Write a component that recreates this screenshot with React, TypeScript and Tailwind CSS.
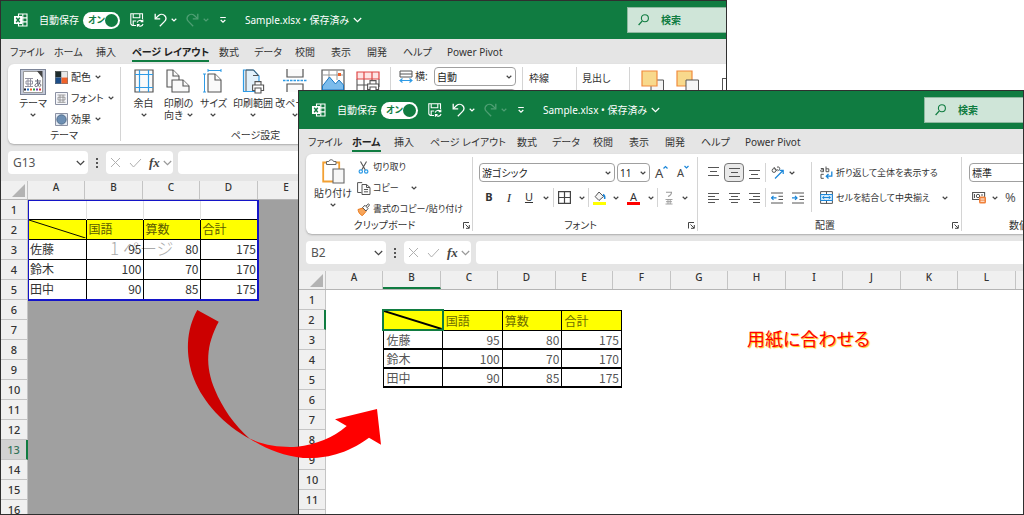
import React from 'react';

type Kids = { children?: React.ReactNode };

const Svg = ({ w, h, vb, label, children }: Kids & { w: number; h: number; vb?: string; label?: string }) => (
  <svg
    width={w}
    height={h}
    viewBox={vb ?? `0 0 ${w} ${h}`}
    fill="none"
    className="block shrink-0"
    aria-hidden={label ? undefined : true}
    aria-label={label}
  >
    {children}
  </svg>
);

const Chevron = ({ w = 6, color = '#444' }: { w?: number; color?: string }) => (
  <Svg w={w} h={w === 6 ? 4 : 6} vb={w === 6 ? '0 0 6 4' : '0 0 9 6'}>
    <path d={w === 6 ? 'M.7.8 3 3 5.3.8' : 'M.8 1 4.5 4.7 8.2 1'} stroke={color} strokeWidth="1.2" />
  </Svg>
);

/* ---------- title bar ---------- */

const ExcelLogo = () => (
  <Svg w={14} h={14}>
    <path d="M4.5 1h8.5v12H4.5zM8.8 1v12M4.5 4.9H13M4.5 8.9H13" stroke="#fff" strokeWidth="1.1" />
    <rect x="0" y="3" width="8" height="8" fill="#fff" />
    <path d="m2.2 4.8 3.6 4.4M5.8 4.8 2.2 9.2" stroke="#107c41" strokeWidth="1.4" />
  </Svg>
);

const SaveIcon = () => (
  <Svg w={14} h={14}>
    <path d="M6 12.5H2.2L.8 11V.8h11.7V6M3.2.8v4h6.6v-4M3.2 12.3V8h3" stroke="#fff" strokeWidth="1.1" />
    <path d="M7.2 9.6a3 3 0 0 1 5.3-1M12.8 6.6v2.2h-2.2M13 11a3 3 0 0 1-5.3 1M7.4 13.8v-2.2h2.2" stroke="#fff" strokeWidth="1.1" />
  </Svg>
);

const Undo = ({ flip }: { flip?: boolean }) => (
  <Svg w={13} h={14}>
    <g transform={flip ? 'matrix(-1 0 0 1 13 0)' : undefined} stroke={flip ? '#4f9f74' : '#fff'} strokeWidth="1.3">
      <path d="M1.2.8v5h5" />
      <path d="M1.4 5.6 4.6 2.6c2-1.7 4.7-1.5 6.2.2 1.6 1.8 1.3 4-.2 5.600L5.800 13.200" />
    </g>
  </Svg>
);

const TitleBar = ({ id }: { id: string }) => (
  <header className="flex h-[38px] shrink-0 items-center bg-[#107c41] pl-[13px] text-[10px] leading-[14px] text-white">
    <ExcelLogo />
    <label htmlFor={`${id}-autosave`} className="ml-[11px] w-11">自動保存</label>
    <span className="relative flex h-[17px] w-[37px] items-center rounded-full bg-white">
      <input id={`${id}-autosave`} type="checkbox" defaultChecked className="peer absolute inset-0 appearance-none" />
      <span className="pl-[5px] text-[9px] font-bold text-[#107c41]">オン</span>
      <span className="ml-auto mr-[2px] size-[13px] rounded-full bg-[#107c41]" />
    </span>
    <button aria-label="保存" className="ml-[10px]"><SaveIcon /></button>
    <button aria-label="元に戻す" className="ml-[10px] flex items-center gap-1"><Undo /><Chevron color="#fff" /></button>
    <button aria-label="やり直し" className="ml-[9px] flex items-center gap-1"><Undo flip /><Chevron color="#4f9f74" /></button>
    <button aria-label="クイック アクセス" className="ml-[10px]">
      <Svg w={8} h={8}><path d="M1.200 1.500h5.600M1.700 4 4 6.200 6.300 4" stroke="#fff" strokeWidth="1.200" /></Svg>
    </button>
    <button className="ml-[18px] flex items-center gap-1 whitespace-nowrap">
      <span>Sample.xlsx • 保存済み</span>
      <Chevron w={9} color="#fff" />
    </button>
    <label className="ml-auto flex h-[26px] w-[99px] shrink-0 items-center gap-3 border border-r-0 border-[#8fb8a0] bg-[#cfe5d8] pl-[10px]">
      <Svg w={11} h={12}>
        <circle cx="6.900" cy="4.200" r="3.500" stroke="#107c41" strokeWidth="1.100" />
        <path d="M4.300 6.800.6 11" stroke="#107c41" strokeWidth="1.200" />
      </Svg>
      <input aria-label="検索" placeholder="検索" className="w-14 bg-transparent font-bold text-[#107c41] outline-none placeholder:text-[#107c41]" />
    </label>
  </header>
);

const TABS = ['ファイル', 'ホーム', '挿入', 'ページ レイアウト', '数式', 'データ', '校閲', '表示', '開発', 'ヘルプ', 'Power Pivot'];

const Tabs = ({ active }: { active: string }) => (
  <nav className="grid h-[25px] shrink-0 grid-cols-[44px_42px_36px_87px_35px_41px_36px_36px_36px_44px_64px] items-start justify-start pl-[9px] pt-[5px] text-[10px] leading-[16px] text-[#333]">
    {TABS.map((t) => (
      <button
        key={t}
        className={
          t === active
            ? 'justify-self-start whitespace-nowrap border-b-2 border-[#107c41] font-bold text-[#222]'
            : 'justify-self-start whitespace-nowrap'
        }
      >
        {t}
      </button>
    ))}
  </nav>
);

/* ---------- ribbon pieces ---------- */

const Launcher = () => (
  <button aria-label="詳細設定" className="mr-[2px]">
    <Svg w={7} h={7}><path d="M.5 6.500V.5H6M2.500 2.500 6 6M6.300 3v3.300H3" stroke="#444" strokeWidth="1" /></Svg>
  </button>
);

const Group = ({ label, width, launcher, children }: Kids & { label?: string; width: string; launcher?: boolean }) => (
  <section className={`${width} flex shrink-0 flex-col border-r border-[#d4d4d4]`}>
    <div className="flex grow">{children}</div>
    <div className="flex h-3 items-center leading-3">
      <span className="grow whitespace-nowrap text-center">{label}</span>
      {launcher && <Launcher />}
    </div>
  </section>
);

const Big = ({ icon, lines, inline }: { icon: React.ReactNode; lines: string[]; inline?: boolean }) => (
  <button className="flex flex-col items-center pt-[2px] leading-3">
    <span className="flex h-[28px] items-start">{icon}</span>
    <span className="whitespace-nowrap">{lines[0]}</span>
    <span className="flex h-3 items-center gap-1 whitespace-nowrap">
      {inline && lines[1]}
      <Chevron />
    </span>
  </button>
);

const Small = ({ icon, text, chev, wide }: { icon: React.ReactNode; text: string; chev?: boolean; wide?: boolean }) => (
  <button className="flex h-5 items-center whitespace-nowrap">
    <span className="flex w-4 shrink-0">{icon}</span>
    <span className={wide ? 'mr-3' : 'mr-1'}>{text}</span>
    {chev && <Chevron />}
  </button>
);

const Drop = ({ label, value, width }: { label: string; value: string; width: string }) => (
  <span className={`${width} relative flex h-[19px] shrink-0 items-center rounded border border-[#a0a0a0] bg-white`}>
    <select aria-label={label} className="h-full w-full appearance-none bg-transparent pl-[2px] text-[10px] leading-3 text-[#222] outline-none">
      <option>{value}</option>
    </select>
    <span className="pointer-events-none absolute right-[3px]"><Chevron /></span>
  </span>
);

const Slot = ({ w, label, children }: Kids & { w: string; label: string }) => (
  <button aria-label={label} className={`${w} flex h-[19px] shrink-0 items-center justify-center`}>{children}</button>
);

const Rule = () => <span className="h-[19px] w-px shrink-0 bg-[#d4d4d4]" />;

const PageCorner = ({ x, y, w, h }: { x: number; y: number; w: number; h: number }) => (
  <g stroke="#555" strokeWidth="1.100" fill="#fafafa">
    <path d={`M${x} ${y}h${w - 6}l6 6v${h - 6}h-${w}z`} />
    <path d={`M${x + w - 6} ${y}v6h6`} />
  </g>
);

const Printer = ({ x, y }: { x: number; y: number }) => (
  <g transform={`translate(${x} ${y})`} stroke="#555" strokeWidth="1.100" fill="#fff">
    <path d="M3 4V.6h6V4M.6 4h11v5.500H.6z" />
    <path d="M3 7h6v5H3z" />
  </g>
);

const ThemeIcon = () => (
  <Svg w={26} h={26}>
    <rect x=".5" y=".5" width="25" height="25" fill="#c3c9d8" stroke="#7d8598" />
    <path d="M3.500 2.500h15l4 5v16h-19z" fill="#fff" stroke="#999" />
    <path d="M17 2h5.500v7z" fill="#444" />
    <path d="M5 9.500h8M5 17.500h8M8 9.500v8M10.500 9.500v8M6 12h6.500v3H6z" stroke="#889" strokeWidth=".9" />
    <path d="M15 12h6M17.500 10c0 4 0 6 1.500 7.500M20 13c-1 3-3 5-4.500 4.500s0-3.500 2.500-3.500 4 2.500 1.500 4" stroke="#556" strokeWidth=".9" />
    <path d="M4 20.500h2" stroke="#223" strokeWidth="2" />
    <path d="M7 20.500h2" stroke="#2a73c5" strokeWidth="2" />
    <path d="M10 20.500h2" stroke="#f0622a" strokeWidth="2" />
    <path d="M13 20.500h2" stroke="#2b9b4b" strokeWidth="2" />
    <path d="M16 20.500h2" stroke="#7b3fb0" strokeWidth="2" />
    <path d="M19 20.500h2" stroke="#d33" strokeWidth="2" />
  </Svg>
);

const ColorsIcon = () => (
  <Svg w={13} h={13}>
    <path d="M0 0h6.500v6.500H0z" fill="#1e2b2b" /><path d="M6.500 0H13v6.500H6.500z" fill="#e9e9e9" />
    <path d="M0 6.500h6.500V13H0z" fill="#1d4e89" /><path d="M6.500 6.500H13V13H6.500z" fill="#f0622a" />
    <path d="M.5.5h12v12H.5z" stroke="#777" strokeWidth=".6" />
  </Svg>
);

const FontsIcon = () => (
  <Svg w={13} h={13}>
    <path d="M.5.5h12v12H.5z" fill="#f5f6fa" stroke="#8b91a3" />
    <path d="M2.500 3h8M2.500 10.300h8M5 3v7.300M8 3v7.300M3 5.200h7v2.800H3z" stroke="#888" strokeWidth=".8" />
  </Svg>
);

const EffectsIcon = () => (
  <Svg w={13} h={13}>
    <path d="M.5.5h12v12H.5z" fill="#e4eaf3" stroke="#8b91a3" />
    <circle cx="6.500" cy="6.500" r="4.700" fill="#6d8fb3" stroke="#46627f" strokeWidth=".8" />
  </Svg>
);

const MarginsIcon = () => (
  <Svg w={20} h={24}>
    <path d="M1 1h18v22H1z" fill="#fafafa" stroke="#555" strokeWidth="1.200" />
    <path d="M5.500 1v22M14.500 1v22M1 5.500h18M1 18.500h18" stroke="#2e9be6" strokeWidth="1.200" />
  </Svg>
);

const OrientationIcon = () => (
  <Svg w={24} h={24}>
    <PageCorner x={1} y={1} w={12} h={17} />
    <PageCorner x={6} y={11} w={17} h={12} />
  </Svg>
);

const SizeIcon = () => (
  <Svg w={20} h={24}>
    <PageCorner x={5} y={5} w={13} h={18} />
    <path d="M5 1.500h13M5 0v3M18 0v3M1.500 5v18M0 5h3M0 23h3" stroke="#2e9be6" />
  </Svg>
);

const PrintAreaIcon = () => (
  <Svg w={23} h={25}>
    <path d="M1.500 1h10l5.500 6v15.500H1.500z" fill="#e3f1fb" stroke="#2e9be6" strokeWidth="1.200" />
    <path d="M4 1h7.500l5 5.500H11M4 1v21" stroke="#555" />
    <Printer x={10} y={12} />
  </Svg>
);

const BreaksIcon = () => (
  <Svg w={24} h={24}>
    <path d="M4 0v8h16V0M4 23v-8h16v8" fill="#fafafa" stroke="#555" strokeWidth="1.200" />
    <path d="M0 11.500h24" stroke="#2e9be6" strokeWidth="1.500" strokeDasharray="2.500 1" />
  </Svg>
);

const BackgroundIcon = () => (
  <Svg w={24} h={24}>
    <path d="M1 1h22v20H1z" fill="#fff" stroke="#555" strokeWidth="1.200" />
    <path d="M1 6h22M8 1v10M16 1v10" stroke="#999" />
    <path d="m1.500 17 7-9 6 7 3.500-4 4.500 5v5h-21z" fill="#7cbcec" stroke="#1b78c2" />
    <path d="M17 4h3v3h-3z" fill="#f0622a" />
  </Svg>
);

const PrintTitlesIcon = () => (
  <Svg w={24} h={24} vb="0 -2 24 24">
    <path d="M1 8v13M1 14h22M8 8v13M16 8v13M23 8v8" stroke="#555" strokeWidth="1.100" />
    <path d="M1 1h22v7H1zM8 1v7M16 1v7" fill="#fde4e4" stroke="#e04545" strokeWidth="1.200" />
    <Printer x={11} y={9} />
  </Svg>
);

const WidthIcon = () => (
  <Svg w={14} h={14}>
    <path d="M1 1h12v6H1zM1 4h12" stroke="#555" />
    <path d="M1 10.500h12M3.500 8.500l-2.500 2 2.500 2M10.500 8.500l2.500 2-2.500 2" stroke="#2e9be6" strokeWidth="1.100" />
  </Svg>
);

const ForwardIcon = ({ back }: { back?: boolean }) => (
  <Svg w={24} h={26}>
    {back ? (
      <>
        <path d="M1 1h15v15H1z" fill="#f8d98c" stroke="#f08a3c" strokeWidth="1.200" />
        <path d="M10 10h12.500v13H10z" fill="#f5f5f5" stroke="#555" />
      </>
    ) : (
      <>
        <path d="M10 10h12.500v13H10z" fill="#f5f5f5" stroke="#555" />
        <path d="M1 1h15v15H1z" fill="#f8d98c" stroke="#f08a3c" strokeWidth="1.200" />
      </>
    )}
  </Svg>
);

const LayoutRibbon = () => (
  <>
    <Group width="w-[113px]" label="テーマ">
      <div className="grid w-[47px] shrink-0 pl-[3px]"><Big icon={<ThemeIcon />} lines={['テーマ']} /></div>
      <div className="flex flex-col gap-px">
        <Small icon={<ColorsIcon />} text="配色" chev />
        <Small icon={<FontsIcon />} text="フォント" chev />
        <Small icon={<EffectsIcon />} text="効果" chev />
      </div>
    </Group>
    <Group width="w-[270px]" label="ページ設定">
      <div className="grid grid-cols-[35px_35px_35px_44px_40px_36px_33px] justify-items-center pl-[5px]">
        <Big icon={<MarginsIcon />} lines={['余白']} />
        <Big icon={<OrientationIcon />} lines={['印刷の', '向き']} inline />
        <Big icon={<SizeIcon />} lines={['サイズ']} />
        <Big icon={<PrintAreaIcon />} lines={['印刷範囲']} />
        <Big icon={<BreaksIcon />} lines={['改ページ']} />
        <Big icon={<BackgroundIcon />} lines={['背景']} />
        <Big icon={<PrintTitlesIcon />} lines={['印刷']} />
      </div>
    </Group>
    <Group width="w-[132px]" label="拡大縮小印刷">
      <div className="grid grid-cols-[16px_19px_82px] content-start items-center gap-y-[3px] pl-2">
        <WidthIcon /><span>横:</span><Drop label="横" value="自動" width="w-[82px]" />
        <WidthIcon /><span>縦:</span><Drop label="縦" value="自動" width="w-[82px]" />
      </div>
    </Group>
    <Group width="w-[54px]"><span className="pl-[6px] pt-1">枠線</span></Group>
    <Group width="w-[53px]"><span className="pl-[5px] pt-1">見出し</span></Group>
    <div className="flex shrink-0 gap-[11px] pl-[11px] pt-[3px]">
      <ForwardIcon /><ForwardIcon back />
      <span className="ml-[11px] mt-2 h-[30px] w-5 shrink-0 border border-[#555]" />
    </div>
  </>
);

/* ---------- home ribbon ---------- */

const PasteIcon = () => (
  <Svg w={23} h={26}>
    <path d="M1.200 3.500h16v19h-16z" fill="#fff" stroke="#f2a033" strokeWidth="1.800" />
    <path d="M4.500 5.500v-3h2.300a2.500 2.500 0 0 1 4.800 0H14v3z" fill="#fff" stroke="#666" />
    <path d="M11 10h11v14H11z" fill="#f7f7f7" stroke="#666" strokeWidth="1.100" />
  </Svg>
);

const CutIcon = () => (
  <Svg w={13} h={13}>
    <path d="M3.500.5 8.300 9M9.500.5 4.700 9" stroke="#555" strokeWidth="1.100" />
    <circle cx="3.800" cy="10.500" r="1.700" stroke="#2e9be6" strokeWidth="1.200" />
    <circle cx="9.200" cy="10.500" r="1.700" stroke="#2e9be6" strokeWidth="1.200" />
  </Svg>
);

const CopyIcon = () => (
  <Svg w={14} h={13}>
    <path d="M4.500 10.500H.6V.6h4.600" stroke="#555" />
    <path d="M5 2.500h4.500l3.500 3v7H5z" fill="#fafafa" stroke="#555" />
    <path d="M9.500 2.500v3H13M7 7.500h4M7 9.800h4" stroke="#555" />
  </Svg>
);

const PainterIcon = () => (
  <Svg w={13} h={13}>
    <path d="m1 6.500 5-1.500 3 3.500-3.500 4C4 12.500 1.500 10 1 6.500z" fill="#f7a55a" stroke="#e8791c" />
    <path d="M5.500 4.500 8 2.300l3 3.200-2 2.500zM9 3l2.500-2.200 1 1.200-2 2.500" fill="#fff" stroke="#555" />
  </Svg>
);

const Lines = ({ rows, y = 3 }: { rows: [number, number][]; y?: number }) => (
  <Svg w={13} h={14}>
    {rows.map(([a, b], i) => (
      <path key={i} d={`M${a} ${y - 0.5 + i * (rows.length === 3 ? 4 : 3)}H${b}`} stroke="#555" strokeWidth="1.100" />
    ))}
  </Svg>
);

const Indent = ({ inward }: { inward?: boolean }) => (
  <Svg w={13} h={12}>
    <path d="M0 1h12M7.500 4.300H12M7.500 7.500H12M0 11h12" stroke="#555" />
    <path d={inward ? 'M0 5.900h5M3 3.900l2 2-2 2' : 'M5.500 5.900H.5M2.500 3.900l-2 2 2 2'} stroke="#1a86d9" strokeWidth="1.200" />
  </Svg>
);

const GrowFont = ({ shrink }: { shrink?: boolean }) => (
  <span className="flex items-start text-[#444]">
    <span className={shrink ? 'text-[11px] leading-4' : 'text-[13px] leading-4'}>A</span>
    <Svg w={5} h={5}>
      <path d={shrink ? 'M.5 1 2.500 3 4.500 1' : 'M.5 3.500 2.500 1.500 4.500 3.500'} stroke="#1a86d9" strokeWidth="1.200" />
    </Svg>
  </span>
);

const HomeRibbon = () => (
  <>
    <Group width="w-[167px]" label="クリップボード" launcher>
      <div className="grid w-[51px] shrink-0 pl-[3px]"><Big icon={<PasteIcon />} lines={['貼り付け']} /></div>
      <div className="flex flex-col gap-px text-[9px]">
        <Small icon={<CutIcon />} text="切り取り" />
        <Small icon={<CopyIcon />} text="コピー" chev wide />
        <Small icon={<PainterIcon />} text="書式のコピー/貼り付け" />
      </div>
    </Group>
    <Group width="w-[225px]" label="フォント" launcher>
      <div className="flex flex-col gap-[6px] pl-[6px] pt-[6px]">
        <div className="flex items-center">
          <Drop label="フォント名" value="游ゴシック" width="w-[136px]" />
          <span className="ml-[2px]"><Drop label="サイズ" value="11" width="w-[33px]" /></span>
          <button aria-label="拡大" className="ml-[5px] w-[22px]"><GrowFont /></button>
          <button aria-label="縮小"><GrowFont shrink /></button>
        </div>
        <div className="flex items-center">
          <Slot w="w-5" label="太字"><b className="text-[11px]">B</b></Slot>
          <Slot w="w-5" label="斜体"><i className="font-['Liberation_Serif',serif] text-[13px]">I</i></Slot>
          <Slot w="w-5" label="下線"><u className="text-[11px]">U</u></Slot>
          <Slot w="w-[14px]" label="下線の種類"><Chevron /></Slot>
          <Rule />
          <Slot w="w-[21px]" label="罫線">
            <Svg w={13} h={13}><path d="M.6.6h11.800v11.800H.6zM6.500.6v11.800M.6 6.500h11.800" stroke="#444" strokeWidth="1.200" /></Svg>
          </Slot>
          <Slot w="w-[13px]" label="罫線の種類"><Chevron /></Slot>
          <Rule />
          <Slot w="w-[21px]" label="塗りつぶし">
            <Svg w={13} h={14}>
              <path d="m6 1 4.500 4.500L6 9.500 2.200 5.700z" fill="#f4f4f4" stroke="#555" />
              <path d="M10 3.500c1.500.5 2 2 1.700 4.500" stroke="#1a86d9" strokeWidth="1.500" />
              <path d="M0 11h13v3H0z" fill="#ff0" />
            </Svg>
          </Slot>
          <Slot w="w-3" label="塗りつぶしの色"><Chevron /></Slot>
          <Slot w="w-[23px]" label="フォントの色">
            <span className="flex w-[13px] flex-col items-center border-b-[3px] border-[#f00] text-[11px] leading-[11px]">A</span>
          </Slot>
          <Slot w="w-3" label="フォントの色の種類"><Chevron /></Slot>
          <Rule />
          <Slot w="w-[21px]" label="ふりがな">
            <Svg w={8} h={14}>
              <path d="M1 1.200h5.500c0 2-1.500 3.500-3.500 4.300" stroke="#999" strokeWidth="1.100" />
              <path d="M.5 8.500h7M.5 13h7M3 8.500V13M5.200 8.500V13M1 10.700h6" stroke="#999" strokeWidth=".9" />
            </Svg>
          </Slot>
          <Slot w="w-[11px]" label="ふりがなの設定"><Chevron /></Slot>
        </div>
      </div>
    </Group>
    <Group width="w-[264px]" label="配置" launcher>
      <div className="flex flex-col gap-[6px] pl-[5px] pt-[6px]">
        <div className="flex">
          <Slot w="w-[21px]" label="上揃え"><Lines rows={[[1, 12], [3, 10], [1, 12]]} y={2} /></Slot>
          <button aria-label="上下中央揃え" className="flex h-[19px] w-5 items-center justify-center rounded border border-[#777] bg-[#e9e9e9]">
            <Lines rows={[[1, 12], [3, 10], [1, 12]]} />
          </button>
          <Slot w="w-[21px]" label="下揃え"><Lines rows={[[1, 12], [3, 10], [1, 12]]} y={5} /></Slot>
          <Rule />
          <Slot w="w-[22px]" label="方向">
            <Svg w={13} h={13}>
              <circle cx="3" cy="4.500" r="1.900" stroke="#555" /><path d="m2.800 1 3.500 4.200" stroke="#555" />
              <path d="M6 1.200c1.500-1 3.500.5 2.500 2.300-1 1.500-2 .7-2.400-.2" stroke="#555" />
              <path d="M4 12.500 12 4.500M8.500 4.300H12.200V8" stroke="#1a86d9" strokeWidth="1.200" />
            </Svg>
          </Slot>
          <Slot w="w-2" label="方向の種類"><Chevron /></Slot>
        </div>
        <div className="flex">
          <Slot w="w-[21px]" label="左揃え"><Lines rows={[[1, 12], [1, 8], [1, 12], [1, 8]]} /></Slot>
          <Slot w="w-5" label="中央揃え"><Lines rows={[[1, 12], [3, 10], [1, 12], [3, 10]]} /></Slot>
          <Slot w="w-[21px]" label="右揃え"><Lines rows={[[1, 12], [5, 12], [1, 12], [5, 12]]} /></Slot>
          <Rule />
          <Slot w="w-[22px]" label="インデント減"><Indent /></Slot>
          <Slot w="w-[20px]" label="インデント増"><Indent inward /></Slot>
        </div>
      </div>
      <span className="ml-[3px] mt-[5px] h-[50px] w-px shrink-0 bg-[#d4d4d4]" />
      <div className="flex flex-col gap-[6px] pl-2 pt-[6px] text-[9px]">
        <button className="flex h-[19px] items-center whitespace-nowrap">
          <span className="w-4">
            <Svg w={13} h={13}>
              <path d="M.8 2.500h2.700v3.200H1.300c-1-.2-1-1.600 0-1.800h2.200M6 .5v5.200h2.800V2.800H6M3.800 8.300H1v4h2.800" stroke="#555" />
              <path d="M11.800 5.500v4.700H6.500M8.500 8l-2.200 2.200 2.200 2.300" stroke="#1a86d9" strokeWidth="1.300" />
            </Svg>
          </span>
          折り返して全体を表示する
        </button>
        <button className="flex h-[19px] items-center whitespace-nowrap">
          <span className="w-4">
            <Svg w={13} h={13}>
              <path d="M.6.6h11.800v11.800H.6zM6.500.6v3M6.500 9.500v3" fill="#fff" stroke="#555" />
              <path d="M.6 3.500h11.800v6H.6z" fill="#d6ecfb" stroke="#1a86d9" />
              <path d="M2.500 6.500h8M4.300 5 2.700 6.500 4.300 8M8.700 5l1.600 1.500L8.700 8" stroke="#1a86d9" />
            </Svg>
          </span>
          <span className="mr-3">セルを結合して中央揃え</span>
          <Chevron />
        </button>
      </div>
    </Group>
    <Group width="w-[115px]" label="数値">
      <div className="flex flex-col gap-[6px] pl-[7px] pt-[6px]">
        <Drop label="表示形式" value="標準" width="w-[100px]" />
        <div className="flex items-center">
          <Slot w="w-5" label="通貨">
            <Svg w={14} h={13}>
              <path d="M.6 1.500h12v7H.6z" stroke="#555" strokeWidth="1.100" /><circle cx="6" cy="5" r="1.700" stroke="#555" /><path d="M2.500 3v4M10 3v2" stroke="#555" />
              <rect x="7" y="5.500" width="7" height="7" rx="1.500" fill="#f0813a" /><path d="M8.500 8h4M8.500 10.200h4" stroke="#fff" />
            </Svg>
          </Slot>
          <Slot w="w-3" label="通貨の種類"><Chevron /></Slot>
          <Slot w="w-[19px]" label="パーセント"><span className="text-[13px] text-[#555]">%</span></Slot>
        </div>
      </div>
    </Group>
  </>
);

/* ---------- window ---------- */

const FormulaBar = ({ cell }: { cell: string }) => (
  <div className="my-[7px] flex h-[23px] shrink-0 items-stretch pl-[7px]">
    <label className="flex w-20 items-center rounded bg-white pr-[3px]">
      <input aria-label="名前ボックス" defaultValue={cell} className="w-0 grow bg-transparent pl-[5px] text-[12px] leading-4 text-[#555] outline-none" />
      <Chevron w={9} />
    </label>
    <span className="flex w-[18px] flex-col items-center justify-center gap-[2px]">
      <i className="size-[2px] bg-[#555]" /><i className="size-[2px] bg-[#555]" /><i className="size-[2px] bg-[#555]" />
    </span>
    <div className="flex w-[67px] items-center rounded bg-white pl-1">
      <button aria-label="キャンセル"><Svg w={11} h={11}><path d="m1 1 9 9M10 1l-9 9" stroke="#b0b0b0" /></Svg></button>
      <button aria-label="入力" className="ml-2"><Svg w={13} h={10}><path d="m1 5 3.500 4L12 1" stroke="#b0b0b0" /></Svg></button>
      <button aria-label="関数の挿入" className="ml-[7px] font-['Liberation_Serif',serif] text-[13px] font-bold italic leading-4 text-[#444]">fx</button>
      <span className="ml-[3px]"><Chevron w={9} color="#999" /></span>
    </div>
    <input aria-label="数式" className="ml-[5px] grow rounded-l bg-white outline-none" />
  </div>
);

type WindowProps = Kids & {
  id: string;
  place: string;
  tab: string;
  ribbon: React.ReactNode;
  cell: string;
  columns: string;
  activeCol?: string;
  activeRow: number;
};

const AppWindow = ({ id, place, tab, ribbon, cell, columns, activeCol, activeRow, children }: WindowProps) => (
  <section className={`${place} flex flex-col overflow-hidden border border-[#2f2f2f] bg-[#e5e5e5]`}>
    <TitleBar id={id} />
    <Tabs active={tab} />
    <div className="ml-[7px] flex h-20 shrink-0 overflow-hidden rounded-l-md bg-white py-[3px] text-[10px] text-[#333] shadow-[0_1px_2px_#aaa]">
      {ribbon}
    </div>
    <FormulaBar cell={cell} />
    <div className="flex h-[19px] shrink-0 border-b border-[#b5b5b5] bg-[#f0f0f0]">
      <span className="flex w-[27px] shrink-0 items-end justify-end border-r border-[#c4c4c4] pb-[2px] pr-[2px]">
        <Svg w={13} h={13}><path d="M13 0v13H0z" fill="#b3b3b3" /></Svg>
      </span>
      {columns.split('').map((c, i) => (
        <span
          key={c}
          className={[
            i % 2 ? 'w-[58px]' : 'w-[57px]',
            'shrink-0 border-r border-[#c4c4c4] text-center text-[10px] font-medium leading-[13px] text-[#333]',
            c === activeCol ? 'border-b-2 border-b-[#107c41]' : '',
          ].join(' ')}
        >
          {c}
        </span>
      ))}
    </div>
    <div className="flex min-h-0 grow">
      <div className="w-[27px] shrink-0 overflow-hidden bg-[#f0f0f0]">
        {Array.from({ length: id === 'layout' ? 16 : 11 }, (_, i) => i + 1).map((n) => (
          <div
            key={n}
            className={
              n === activeRow
                ? id === 'layout'
                  ? 'h-5 border-b border-r-2 border-b-[#c4c4c4] border-r-[#107c41] bg-[#d2d2d2] text-center text-[11px] font-medium leading-5 text-[#35745a]'
                  : 'h-5 border-b border-r-2 border-b-[#c4c4c4] border-r-[#107c41] text-center text-[11px] font-medium leading-5 text-[#333]'
                : 'h-5 border-b border-r border-[#c4c4c4] text-center text-[11px] font-medium leading-5 text-[#333]'
            }
          >
            {n}
          </div>
        ))}
        <div className="h-5 border-r border-[#c4c4c4]" />
      </div>
      {children}
    </div>
  </section>
);

const HEAD = ['国語', '算数', '合計'];
const DATA: [string, number, number, number][] = [
  ['佐藤', 95, 80, 175],
  ['鈴木', 100, 70, 170],
  ['田中', 90, 85, 175],
];

const Diagonal = ({ w, weight }: { w: number; weight: number }) => (
  <svg viewBox={`0 0 ${w} 19`} preserveAspectRatio="none" className="block h-[18px] w-full" aria-hidden>
    <path d={`M0 0 ${w} 19`} stroke="#000" strokeWidth={weight} />
  </svg>
);

const PrintSheet = () => (
  <div className="grow bg-[#a0a0a0] font-['Noto_Sans_CJK_JP',sans-serif]">
    <div className="relative w-[231px] border-b-2 border-l border-r-2 border-t border-[#1414c8] bg-white">
      <span className="absolute left-[81px] top-[37px] text-[17px] font-light leading-5 text-[#aaa]">1 ページ</span>
      <table className="relative w-full table-fixed border-collapse text-[12px] leading-[18px] text-[#333]">
        <tbody>
          <tr className="h-[18px]">
            {[0, 1, 2, 3].map((i) => <td key={i} className="border-r border-[#e0e0e0] p-0 last:border-r-0" />)}
          </tr>
          <tr className="h-5 bg-[#ff0] text-left">
            <th className="border-r border-y border-black p-0"><Diagonal w={57} weight={1} /></th>
            {HEAD.map((h) => (
              <th key={h} className="border border-black p-0 pl-[2px] font-normal text-[#5a5a00] last:border-r-0">{h}</th>
            ))}
          </tr>
          {DATA.map(([name, ...v]) => (
            <tr key={name} className="h-5 text-right">
              <td className="border-r border-t border-black p-0 pl-px text-left">{name}</td>
              {v.map((n, i) => (
                <td key={i} className="border-l border-t border-black p-0 pr-px">{n}</td>
              ))}
            </tr>
          ))}
        </tbody>
      </table>
    </div>
  </div>
);

const FittedSheet = () => (
  <div className="flex grow items-start bg-white pl-14 pt-[19px] font-['Noto_Sans_CJK_JP',sans-serif]">
    <table className="w-60 shrink-0 table-fixed border-collapse border border-black text-[12px] leading-[17px] text-[#555]">
      <tbody>
        <tr className="h-5 bg-[#ff0] text-left">
          <th className="border-2 border-[#107c41] p-0"><Diagonal w={60} weight={2} /></th>
          {HEAD.map((h) => <th key={h} className="border border-black p-0 pl-[2px] font-normal text-[#6b6b00]">{h}</th>)}
        </tr>
        {DATA.map(([name, ...v]) => (
          <tr key={name} className="h-[19px] text-right">
            <td className="border border-b-2 border-black p-0 pl-[3px] text-left">{name}</td>
            {v.map((n, i) => <td key={i} className="border border-b-2 border-black p-0 pr-[2px]">{n}</td>)}
          </tr>
        ))}
      </tbody>
    </table>
    <p className="ml-[125px] mt-[15px] whitespace-nowrap text-[18px] leading-7 text-[#f00] [text-shadow:1px_1px_1px_#ffc000]">
      用紙に合わせる
    </p>
  </div>
);

export default function App() {
  return (
    <main className="relative h-screen overflow-hidden bg-white font-['Noto_Sans','Noto_Sans_CJK_JP',sans-serif] [font-feature-settings:'palt']">
      <AppWindow
        id="layout"
        place="h-full w-[71%]"
        tab="ページ レイアウト"
        ribbon={<LayoutRibbon />}
        cell="G13"
        columns="ABCDE"
        activeRow={13}
      >
        <PrintSheet />
      </AppWindow>
      <AppWindow
        id="home"
        place="absolute bottom-0 left-[298px] right-0 top-[90px]"
        tab="ホーム"
        ribbon={<HomeRibbon />}
        cell="B2"
        columns="ABCDEFGHIJKL"
        activeCol="B"
        activeRow={2}
      >
        <FittedSheet />
      </AppWindow>
      <svg className="pointer-events-none absolute left-[180px] top-[300px]" width="210" height="170" viewBox="180 300 210 170" aria-hidden>
        <path
          d="M197.300 310 218.700 321.700C206 345 205 366 215 390 222 407 234 425 250 439 224 425 203 402 194 379 185 355 186 330 197.300 310z"
          fill="#c00"
        />
        <path
          d="M249 438.300C265 446 282 447.500 297 446.700 316 444.500 333 438 346.700 426L335 419.300 377 409 381 444.700 369 437.700C344 456 322 458.500 303 458 283 456 266 449 249 438.300z"
          fill="#f00"
        />
      </svg>
    </main>
  );
}
